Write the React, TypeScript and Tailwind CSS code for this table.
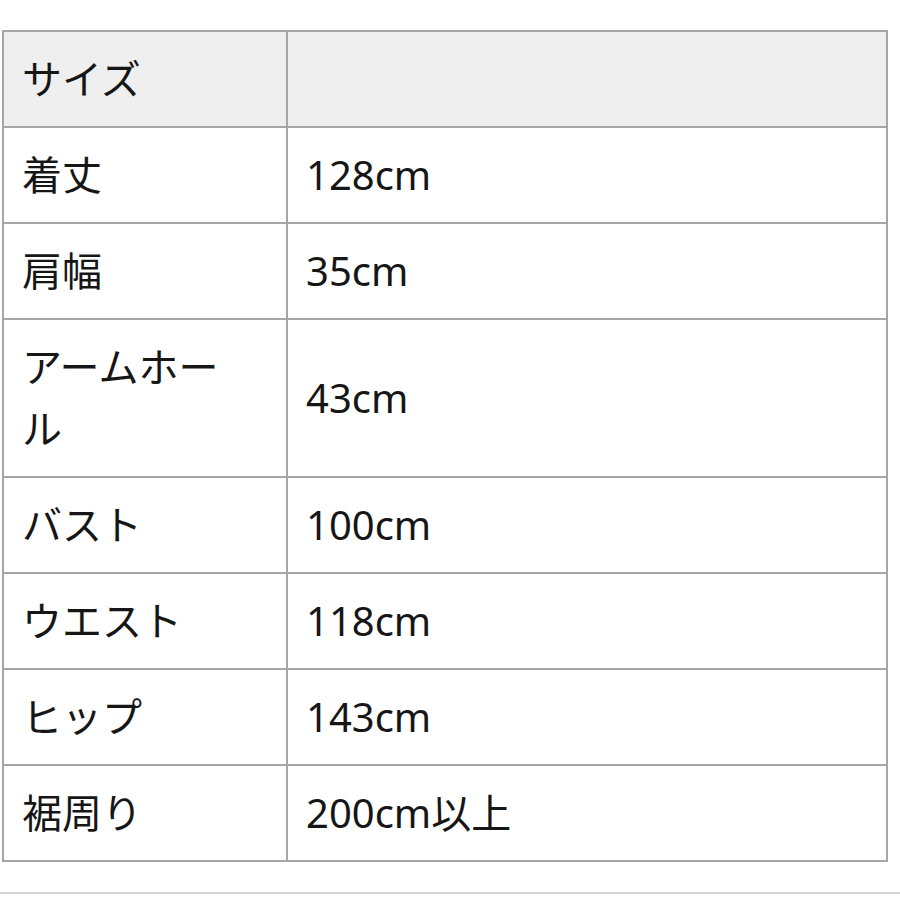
const rows: [string, string][] = [
  ["着丈", "128cm"],
  ["肩幅", "35cm"],
  ["アームホール", "43cm"],
  ["バスト", "100cm"],
  ["ウエスト", "118cm"],
  ["ヒップ", "143cm"],
  ["裾周り", "200cm以上"],
];

export default function App() {
  return (
    <div
      className="w-[900px] h-[900px] bg-white text-[#161616]"
      style={{ fontFamily: '"Noto Sans", "Noto Sans CJK JP", sans-serif' }}
    >
      <div className="pt-[30px] pl-[2px] pb-[30px] border-b-2 border-[#d4d4d4]">
        <table className="w-[886px] border-collapse table-fixed text-[40px] leading-[62px]">
          <colgroup>
            <col className="w-[284px]" />
            <col />
          </colgroup>
          <tbody>
            <tr className="bg-[#efefef]">
              <td className="border-2 border-[#a6a6a6] pl-[18px] pr-[30px] py-[16px] align-middle">
                サイズ
              </td>
              <td className="border-2 border-[#a6a6a6] pl-[18px] py-[16px]"></td>
            </tr>
            {rows.map(([label, value]) => (
              <tr key={label}>
                <td className="border-2 border-[#a6a6a6] pl-[18px] pr-[30px] py-[16px] align-middle">
                  {label}
                </td>
                <td className="border-2 border-[#a6a6a6] pl-[18px] py-[16px] align-middle">
                  {value}
                </td>
              </tr>
            ))}
          </tbody>
        </table>
      </div>
    </div>
  );
}
